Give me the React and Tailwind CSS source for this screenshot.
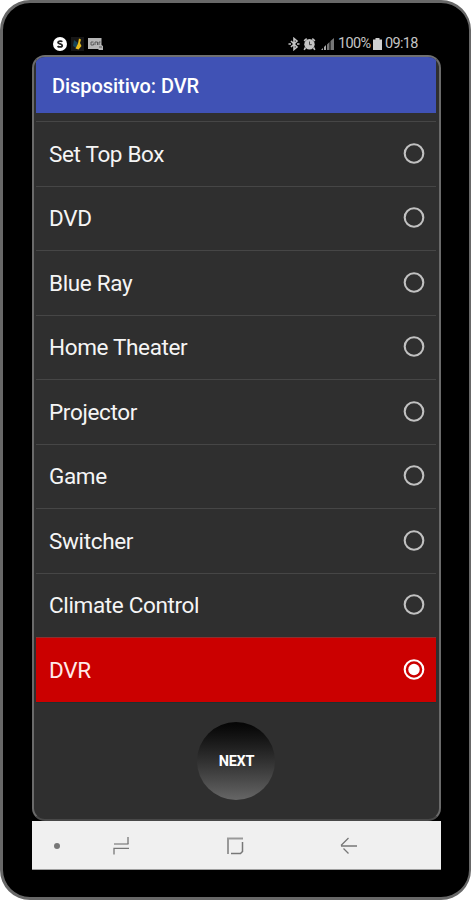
import { useState } from 'react'

const DISPOSITIVOS = [
  'Set Top Box',
  'DVD',
  'Blue Ray',
  'Home Theater',
  'Projector',
  'Game',
  'Switcher',
  'Climate Control',
  'DVR',
]

function StatusBar() {
  return (
    <div className="flex h-[22px] shrink-0 items-center justify-between pl-[21px] pr-[23px] text-[#c4c4c4]">
      <div className="flex items-center gap-[4px]">
        <svg width="14" height="14" viewBox="0 0 14 14" fill="none">
          <circle cx="7" cy="7" r="7" fill="#fff" />
          <path d="M9.3 4.8C8.6 3.9 5 3.7 5 5.6c0 1.7 4.2 1 4.2 2.9 0 1.9-3.6 1.8-4.6.6" stroke="#222" strokeWidth="1.8" />
        </svg>
        <svg width="13" height="14" viewBox="0 0 13 14">
          <rect width="13" height="14" fill="#161616" />
          <path d="M3 3l4 3-2 5-3-2z" fill="#16455a" />
          <path d="M8 1.5l2 1-1 3.5 1.5 3-3 3.5-3-1 2.5-5z" fill="#e8bd1c" />
        </svg>
        <svg width="16" height="14" viewBox="0 0 16 14">
          <path d="M0 1h13.500v7l1.500 1v4h-4l-1-1H0z" fill="#b5b5b5" />
          <path d="M5.500 5H3v3h2.500V6.500M7 8V5h2.500v3M11 8V5h1.500" stroke="#5a5a5a" strokeWidth="1" fill="none" />
          <path d="M11 10h3" stroke="#5a5a5a" />
        </svg>
      </div>
      <div className="flex items-center">
        <svg width="12" height="14" viewBox="0 0 12 14" fill="none" stroke="currentColor">
          <path d="M3 4l6 6-3 2.500v-11L9 4l-6 6" strokeWidth="1.600" />
          <path d="M.5 7h2.500M9 7h2.500" strokeWidth="1.700" />
        </svg>
        <svg className="ml-[3px]" width="13" height="14" viewBox="0 0 13 14">
          <path d="M3.200 1L.6 3.200l1 1.200L4.200 2.200zM9.800 1l2.600 2.200-1 1.200-2.600-2.200z" fill="currentColor" />
          <circle cx="6.500" cy="7.300" r="5.200" fill="currentColor" />
          <path d="M2.500 10.500L1.200 12.800M10.500 10.500l1.300 2.300" stroke="currentColor" strokeWidth="1.600" />
          <path d="M6.500 4.500v3.200h2.300" stroke="#444" fill="none" />
        </svg>
        <svg className="ml-[5px]" width="13" height="14" viewBox="0 0 13 14">
          <path d="M0 13h2v-2zM3 13h2V8L3 10z" fill="#aaa" />
          <path d="M6 13h2.500V5L6 7.500zM9.500 13H13V1L9.500 4z" fill="#777" />
        </svg>
        <span className="ml-[4px] w-[33px] whitespace-nowrap text-[14.500px] leading-none tracking-[-0.650px]">100%</span>
        <svg className="ml-[2px]" width="9" height="14" viewBox="0 0 9 14">
          <path d="M2.500 1h4v1.500H9V13H0V2.500h2.500z" fill="#cfcfcf" />
        </svg>
        <span className="ml-[3px] w-[33px] whitespace-nowrap text-[14.500px] leading-none tracking-[-0.650px]">09:18</span>
      </div>
    </div>
  )
}

function Radio({ activo }) {
  return (
    <svg width="22" height="22" viewBox="0 0 22 22" fill="none">
      <circle cx="11" cy="10.500" r="9.300" stroke={activo ? '#fff' : '#c1c1c1'} strokeWidth="2.100" />
      {activo && <circle cx="11" cy="10.500" r="5.700" fill="#fff" />}
    </svg>
  )
}

function NavBar() {
  return (
    <div className="flex h-[49px] shrink-0 items-center border-b border-[#a0a0a0] bg-[#f0f0f0] pl-[22px] pt-[2px]">
      <span className="size-[6px] rounded-full bg-[#777]" />
      <svg className="ml-[53px]" width="17" height="18" viewBox="0 0 17 18" fill="none" strokeWidth="1.300">
        <path d="M1 7h14.500" stroke="#aaa" strokeWidth="2" />
        <path d="M15 0v7M1 17.500v-6.200h15" stroke="#777" />
      </svg>
      <svg className="ml-[97px]" width="17" height="18" viewBox="0 0 17 18" fill="none">
        <path d="M1 17V1.500h15" stroke="#999" strokeWidth="2" />
        <path d="M15.500 5v9.500l-2 2H4" stroke="#777" strokeWidth="1.500" />
      </svg>
      <svg className="ml-[96px]" width="18" height="18" viewBox="0 0 18 18" fill="none" stroke="#777" strokeWidth="1.300">
        <path d="M8.500 1L1 8.500M3.500 11.500L8.500 16.500M1 9h16" />
      </svg>
    </div>
  )
}

export default function App() {
  const [seleccion, setSeleccion] = useState('DVR')

  return (
    <div className="h-[900px] w-[471px] overflow-hidden bg-white font-['Roboto',sans-serif]">
      <div className="flex h-[900px] w-[471px] flex-col rounded-[30px] border-[3px] border-r-2 border-[#686868] bg-black pl-[29px] pr-[28px] pt-[30px]">
        <StatusBar />

        <div className="flex h-[766px] shrink-0 flex-col overflow-hidden rounded-[13px] border-2 border-b-[#484848] border-l-[#6a6a6a] border-r-[#6a6a6a] border-t-[#707070] bg-[#2f2f2f] pl-[2px] pr-[3px]">
          <header className="flex h-[56px] shrink-0 items-center bg-[#4052b5] pl-[16px] pt-[2px] text-[20px] font-medium tracking-[-0.050px] text-white">
            Dispositivo: DVR
          </header>

          <ul className="mt-[8px] shrink-0">
            {DISPOSITIVOS.map(d => (
              <li
                key={d}
                onClick={() => setSeleccion(d)}
                className={`flex h-[64.5px] items-center justify-between border-t-[1.5px] pl-[13px] pr-[11.5px] text-[22.500px] tracking-[-0.350px] ${d === seleccion ? 'border-[#8a3030] bg-[#cb0000] text-[#ffe9e9]' : 'border-[#464646] text-[#f5f5f5]'}`}
              >
                <span className="whitespace-nowrap pt-[2px]">{d}</span>
                <Radio activo={d === seleccion} />
              </li>
            ))}
          </ul>

          <div className="flex flex-1 items-start justify-center border-t border-[#1f3030] pt-[19px]">
            <button className="size-[78px] rounded-full bg-linear-to-b from-[#050505] to-[#666] pl-[1px] pt-[2px] text-[14.500px] font-bold tracking-[-0.250px] text-white">
              NEXT
            </button>
          </div>
        </div>

        <NavBar />
      </div>
    </div>
  )
}
